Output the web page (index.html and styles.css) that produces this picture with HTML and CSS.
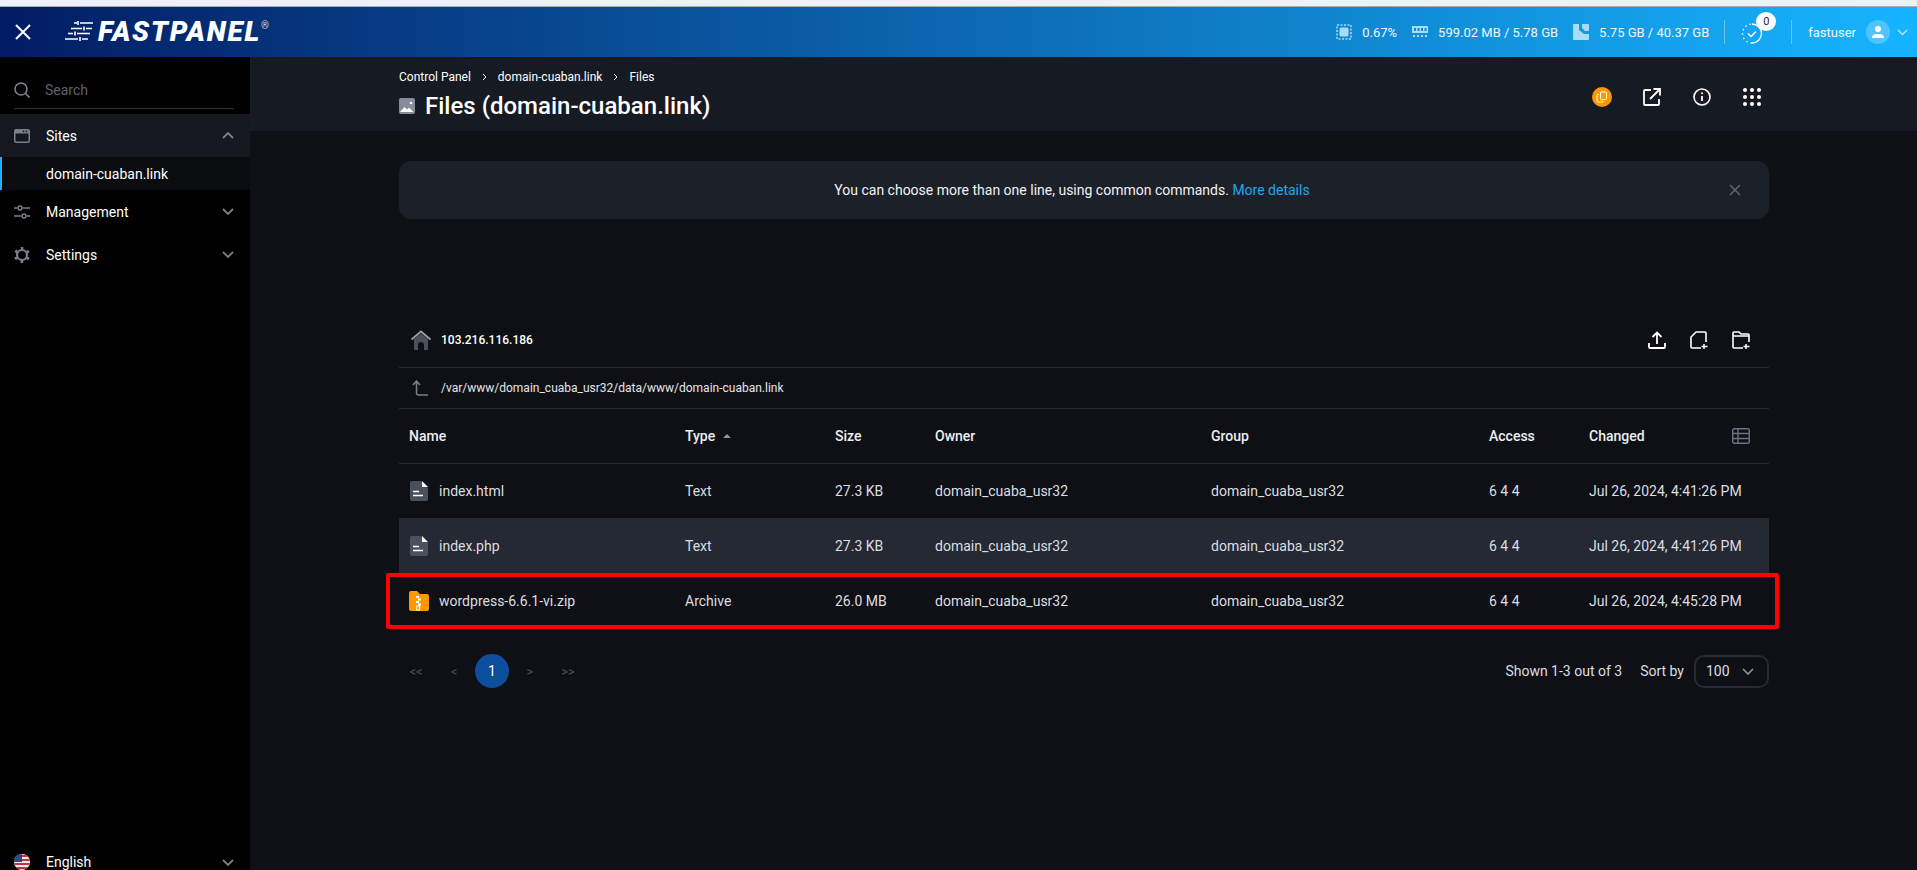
FILE: index.html
```html
<!DOCTYPE html>
<html lang="en">

<head>
    <meta charset="UTF-8">
    <meta name="viewport" content="width=device-width, initial-scale=1.0">
    <title>Files (domain-cuaban.link)</title>
    <link rel="stylesheet" href="styles.css">
</head>

<body>

    <div class="browser-strip"></div>

    <!-- Top bar -->
    <header class="topbar">
        <svg class="close-icon" width="16" height="16" viewBox="0 0 16 16"><path d="M1 1l14 14M15 1L1 15" stroke="#fff" stroke-width="2" fill="none"/></svg>
        <div class="logo">
            <svg width="28" height="22" viewBox="0 0 28 22" fill="none" stroke="#fff" stroke-width="1.6">
                <path d="M9 2h3M15 2h13"/>
                <path d="M6 7.500h11M21 7.500h6"/>
                <path d="M3 12.500h5M12 12.500h13"/>
                <path d="M0 18h13M17 18h6"/>
                <path d="M13 0v4M19 5.500v4M10 10.500v4M15 16v4"/>
            </svg>
            <span class="logo-text">FASTPANEL</span>
            <span class="logo-reg">®</span>
        </div>
        <div class="stats">
            <div class="stat">
                <svg width="16" height="16" viewBox="0 0 16 16"><rect x="3.500" y="3.500" width="9" height="9" rx="1.500" fill="#a9dcf7"/><path d="M1 1h14v14H1z" fill="none" stroke="#a9dcf7" stroke-width="1.500" stroke-dasharray="2 1.500"/></svg>
                <span>0.67%</span>
            </div>
            <div class="stat">
                <svg width="16" height="14" viewBox="0 0 16 14" fill="#a9dcf7"><path d="M0 1h16v7H0z"/><path d="M2 3h2v3H2zM5.500 3h2v3h-2zM9 3h2v3H9zM12.500 3h2v3h-2z" fill="#1587cf"/><path d="M1 10h2v2H1zM5 10h2v2H5zM9 10h2v2H9zM13 10h2v2h-2z"/></svg>
                <span>599.02 MB / 5.78 GB</span>
            </div>
            <div class="stat">
                <svg width="16" height="16" viewBox="0 0 16 16"><path d="M1 0h5v6l5 4h5v5a1 1 0 0 1-1 1H1a1 1 0 0 1-1-1V1a1 1 0 0 1 1-1zM9 0h6a1 1 0 0 1 1 1v6h-4L9 4z" fill="#a9dcf7"/></svg>
                <span>5.75 GB / 40.37 GB</span>
            </div>
            <div class="divider"></div>
            <div class="tasks">
                <svg width="22" height="24" viewBox="0 0 22 24" fill="none" stroke="#fff" stroke-width="1.300">
                    <path d="M11 3a9.500 9.500 0 0 1 0 19" />
                    <path d="M11 22a9.500 9.500 0 0 1-9.500-9.500A9.500 9.500 0 0 1 11 3" stroke-dasharray="1.500 3"/>
                    <path d="M7 12.500l3 3 5-5" stroke-width="1.500"/>
                </svg>
                <span class="badge">0</span>
            </div>
            <div class="divider"></div>
            <span class="username">fastuser</span>
            <span class="avatar">
                <svg width="12" height="12" viewBox="0 0 12 12" fill="#fff"><circle cx="6" cy="3" r="3"/><path d="M0 12c0-3 2-4 6-4s6 1 6 4z"/></svg>
            </span>
            <svg class="user-chevron" width="11" height="7" viewBox="0 0 11 7"><path d="M1 1l4.500 4.500L10 1" stroke="#b5e2fb" stroke-width="1.500" fill="none"/></svg>
        </div>
    </header>

    <div class="layout">

        <!-- Sidebar -->
        <aside class="sidebar">
            <div class="search">
                <div class="search-inner">
                    <svg width="16" height="16" viewBox="0 0 16 16" fill="none" stroke="#79808c" stroke-width="1.600"><circle cx="7" cy="7" r="6"/><path d="M11.500 11.500L15.500 15.500"/></svg>
                    <span>Search</span>
                </div>
            </div>
            <div class="nav-item nav-open">
                <svg width="16" height="14" viewBox="0 0 16 14"><path fill-rule="evenodd" d="M2 0h12a2 2 0 0 1 2 2v10a2 2 0 0 1-2 2H2a2 2 0 0 1-2-2V2a2 2 0 0 1 2-2zm-.500 4.500V12a.500.500 0 0 0 .500.500h12a.500.500 0 0 0 .500-.500V4.500z" fill="#79808c"/><circle cx="9.500" cy="2.300" r="0.900" fill="#15181f"/><circle cx="12.500" cy="2.300" r="0.900" fill="#15181f"/></svg>
                <span>Sites</span>
                <svg class="chevron" width="12" height="7" viewBox="0 0 12 7"><path d="M1 6l5-5 5 5" stroke="#79808c" stroke-width="1.800" fill="none"/></svg>
            </div>
            <div class="nav-sub">domain-cuaban.link</div>
            <div class="nav-item">
                <svg width="16" height="14" viewBox="0 0 16 14" fill="none" stroke="#79808c" stroke-width="1.500"><path d="M0 3h3M9 3h7M0 11h7M13 11h3"/><circle cx="6" cy="3" r="2"/><circle cx="10" cy="11" r="2"/></svg>
                <span>Management</span>
                <svg class="chevron" width="12" height="7" viewBox="0 0 12 7"><path d="M1 1l5 5 5-5" stroke="#79808c" stroke-width="1.800" fill="none"/></svg>
            </div>
            <div class="nav-item">
                <svg width="16" height="16" viewBox="0 0 16 16" fill="none" stroke="#79808c"><circle cx="8" cy="8" r="5" stroke-width="2.200"/><circle cx="8" cy="8" r="6.800" stroke-width="2.400" stroke-dasharray="2.800 4.320" stroke-dashoffset="1.400" transform="rotate(-90 8 8)"/></svg>
                <span>Settings</span>
                <svg class="chevron" width="12" height="7" viewBox="0 0 12 7"><path d="M1 1l5 5 5-5" stroke="#79808c" stroke-width="1.800" fill="none"/></svg>
            </div>
            <div class="nav-item nav-lang">
                <svg width="16" height="16" viewBox="0 0 16 16"><defs><clipPath id="flag"><circle cx="8" cy="8" r="8"/></clipPath></defs><g clip-path="url(#flag)"><rect width="16" height="16" fill="#eee"/><path d="M0 1h16v2H0zM0 5h16v2H0zM0 9h16v2H0zM0 13h16v2H0z" fill="#c8313e"/><rect width="8" height="8" fill="#2d4a8a"/></g></svg>
                <span>English</span>
                <svg class="chevron" width="12" height="7" viewBox="0 0 12 7"><path d="M1 1l5 5 5-5" stroke="#79808c" stroke-width="1.800" fill="none"/></svg>
            </div>
        </aside>

        <main class="main">

            <!-- Page header -->
            <div class="page-head">
                <div class="page-head-left">
                    <div class="breadcrumbs">
                        <span>Control Panel</span>
                        <svg width="5" height="8" viewBox="0 0 5 8"><path d="M1 1l3 3-3 3" stroke="#fff" fill="none"/></svg>
                        <span>domain-cuaban.link</span>
                        <svg width="5" height="8" viewBox="0 0 5 8"><path d="M1 1l3 3-3 3" stroke="#fff" fill="none"/></svg>
                        <span>Files</span>
                    </div>
                    <div class="page-title">
                        <svg width="16" height="16" viewBox="0 0 16 16"><rect width="16" height="16" rx="2" fill="#868c99"/><path d="M1 14l4.500-5 2.500 2.500 2-2 4.500 4.500z" fill="#fff"/><circle cx="12" cy="5" r="1.300" fill="#fff"/></svg>
                        <h1>Files (domain-cuaban.link)</h1>
                    </div>
                </div>
                <div class="page-actions">
                    <span class="orange-dot">
                        <svg width="12" height="12" viewBox="0 0 12 12" fill="none" stroke="#fff" stroke-width="1"><rect x="4.500" y="1" width="6" height="7.500" rx="1"/><path d="M3 3.500H2a1 1 0 0 0-1 1V10a1 1 0 0 0 1 1h4a1 1 0 0 0 1-1v-.500"/></svg>
                    </span>
                    <svg width="18" height="18" viewBox="0 0 18 18" fill="none" stroke="#fff" stroke-width="1.800"><path d="M8 2H2a1 1 0 0 0-1 1v13a1 1 0 0 0 1 1h13a1 1 0 0 0 1-1v-5"/><path d="M7 11L17 1M10.500 1H17v6.500"/></svg>
                    <svg width="18" height="18" viewBox="0 0 18 18" fill="none" stroke="#fff" stroke-width="1.600"><circle cx="9" cy="9" r="8"/><path d="M9 8v5" stroke-width="1.800"/><circle cx="9" cy="5.300" r="1" fill="#fff" stroke="none"/></svg>
                    <svg width="18" height="18" viewBox="0 0 18 18" fill="#fff"><circle cx="2" cy="2" r="2"/><circle cx="9" cy="2" r="2"/><circle cx="16" cy="2" r="2"/><circle cx="2" cy="9" r="2"/><circle cx="9" cy="9" r="2"/><circle cx="16" cy="9" r="2"/><circle cx="2" cy="16" r="2"/><circle cx="9" cy="16" r="2"/><circle cx="16" cy="16" r="2"/></svg>
                </div>
            </div>

            <div class="content">

                <!-- Notice -->
                <div class="notice">
                    <p>You can choose more than one line, using common commands. <a href="#">More details</a></p>
                    <svg class="notice-close" width="12" height="12" viewBox="0 0 12 12"><path d="M1 1l10 10M11 1L1 11" stroke="#5d636f" stroke-width="1.600" fill="none"/></svg>
                </div>

                <!-- File manager -->
                <div class="host-row">
                    <svg width="20" height="20" viewBox="0 0 20 20"><path d="M3 9l7-5.500L17 9v10a1 1 0 0 1-1 1h-3v-5a3 3 0 0 0-6 0v5H4a1 1 0 0 1-1-1z" fill="#4a505c"/><path d="M.500 9.500L10 1.500l9.500 8" stroke="#9aa0ab" stroke-width="1.800" fill="none"/></svg>
                    <span class="host-name">103.216.116.186</span>
                    <div class="host-actions">
                        <svg width="18" height="18" viewBox="0 0 18 18" fill="none" stroke="#fff" stroke-width="1.800"><path d="M9 13V2M4.500 6L9 1.500 13.500 6"/><path d="M1 12v4a1 1 0 0 0 1 1h14a1 1 0 0 0 1-1v-4"/></svg>
                        <svg width="18" height="18" viewBox="0 0 18 18" fill="none" stroke="#fff" stroke-width="1.600"><path d="M11 17H2a1 1 0 0 1-1-1V6l5-5h9a1 1 0 0 1 1 1v9"/><path d="M14 13v5M11.500 15.500h6" stroke-width="1.500"/></svg>
                        <svg width="18" height="18" viewBox="0 0 18 18" fill="none" stroke="#fff" stroke-width="1.600"><path d="M11 17H2a1 1 0 0 1-1-1V2a1 1 0 0 1 1-1h5l2 2h7a1 1 0 0 1 1 1v7M1 5h16"/><path d="M14 13v5M11.500 15.500h6" stroke-width="1.500"/></svg>
                    </div>
                </div>
                <div class="path-row">
                    <svg width="16" height="16" viewBox="0 0 16 16" fill="none" stroke="#79808c" stroke-width="1.500"><path d="M1 5l3.500-4L8 5M4.500 1.500V13a2 2 0 0 0 2 2H16"/></svg>
                    <span>/var/www/domain_cuaba_usr32/data/www/domain-cuaban.link</span>
                </div>

                <div class="file-row file-head">
                    <div>Name</div>
                    <div class="sorted">Type <span class="sort-arrow"></span></div>
                    <div>Size</div>
                    <div>Owner</div>
                    <div>Group</div>
                    <div>Access</div>
                    <div class="changed-head">
                        Changed
                        <svg width="18" height="16" viewBox="0 0 18 16" fill="none" stroke="#6b7280" stroke-width="1.400"><rect x=".7" y=".7" width="16.600" height="14.600" rx="1.500"/><path d="M.7 5.500h16.600M.7 10.500h16.600M6 .7v14.600"/></svg>
                    </div>
                </div>

                <div class="file-row">
                    <div class="file-name">
                        <svg width="18" height="20" viewBox="0 0 18 20"><path d="M2 0h9l7 7v11a2 2 0 0 1-2 2H2a2 2 0 0 1-2-2V2a2 2 0 0 1 2-2z" fill="#4a505c"/><path d="M12 0l6 6h-6z" fill="#fff"/><path d="M3 10.500h6M3 14.500h10" stroke="#fff" stroke-width="1.500"/></svg>
                        <span>index.html</span>
                    </div>
                    <div>Text</div>
                    <div>27.3 KB</div>
                    <div>domain_cuaba_usr32</div>
                    <div>domain_cuaba_usr32</div>
                    <div>6 4 4</div>
                    <div>Jul 26, 2024, 4:41:26 PM</div>
                </div>
                <div class="file-row file-hover">
                    <div class="file-name">
                        <svg width="18" height="20" viewBox="0 0 18 20"><path d="M2 0h9l7 7v11a2 2 0 0 1-2 2H2a2 2 0 0 1-2-2V2a2 2 0 0 1 2-2z" fill="#4a505c"/><path d="M12 0l6 6h-6z" fill="#fff"/><path d="M3 10.500h6M3 14.500h10" stroke="#fff" stroke-width="1.500"/></svg>
                        <span>index.php</span>
                    </div>
                    <div>Text</div>
                    <div>27.3 KB</div>
                    <div>domain_cuaba_usr32</div>
                    <div>domain_cuaba_usr32</div>
                    <div>6 4 4</div>
                    <div>Jul 26, 2024, 4:41:26 PM</div>
                </div>
                <div class="file-row file-marked">
                    <div class="file-name">
                        <svg class="zip-icon" width="20" height="20" viewBox="0 0 20 20"><path d="M2 0h6l3 3h7a2 2 0 0 1 2 2v13a2 2 0 0 1-2 2H2a2 2 0 0 1-2-2V2a2 2 0 0 1 2-2z" fill="#ff9800"/><path d="M7 5h3v2H7zM9 7.500h3v2H9zM7 10h3v2H7zM9 12.500h3v2H9z" fill="#fff"/><rect x="7.700" y="15" width="3" height="4" fill="none" stroke="#fff"/></svg>
                        <span>wordpress-6.6.1-vi.zip</span>
                    </div>
                    <div>Archive</div>
                    <div>26.0 MB</div>
                    <div>domain_cuaba_usr32</div>
                    <div>domain_cuaba_usr32</div>
                    <div>6 4 4</div>
                    <div>Jul 26, 2024, 4:45:28 PM</div>
                </div>

                <!-- Pagination -->
                <div class="pager-row">
                    <div class="pager">
                        <span>&lt;&lt;</span>
                        <span>&lt;</span>
                        <span class="page-current">1</span>
                        <span>&gt;</span>
                        <span>&gt;&gt;</span>
                    </div>
                    <div class="pager-right">
                        <span>Shown 1-3 out of 3</span>
                        <span class="sort-label">Sort by</span>
                        <div class="sort-select">
                            <span>100</span>
                            <svg width="12" height="7" viewBox="0 0 12 7"><path d="M1 1l5 5 5-5" stroke="#8b93a3" stroke-width="1.600" fill="none"/></svg>
                        </div>
                    </div>
                </div>
            </div>
        </main>
    </div>

</body>

</html>
```

FILE: styles.css
```css
* {
    box-sizing: border-box;
}

html, body {
    height: 100%;
}

body {
    font-family: Roboto, Arial, sans-serif;
    font-size: 14px;
    background-color: #0e1015;
    color: #e4e6ea;
    margin: 0;
    padding: 0;
    overflow: hidden;
    display: flex;
    flex-direction: column;
}

svg {
    flex-shrink: 0;
    display: block;
}

.browser-strip {
    height: 7px;
    background-color: #eef1f8;
    border-bottom: 1px solid #a9acb2;
}

/* Top bar */
.topbar {
    height: 50px;
    display: flex;
    align-items: center;
    padding: 0 9px 0 15px;
    background: linear-gradient(to right, #021c63, #16b4ff);
    color: #fff;
}

.close-icon {
    margin-right: 34px;
}

.logo {
    display: flex;
    align-items: center;
    gap: 5px;
}

.logo-text {
    font-size: 28px;
    font-weight: 900;
    font-style: italic;
    letter-spacing: 1.7px;
    line-height: 1;
}

.logo-reg {
    font-size: 10px;
    margin: -14px 0 0 -5px;
    color: #cfd8ea;
}

.stats {
    margin-left: auto;
    display: flex;
    align-items: center;
    font-size: 13px;
    color: #eef7fd;
}

.stat {
    display: flex;
    align-items: center;
    gap: 10px;
    margin-right: 15px;
}

.divider {
    width: 1px;
    height: 24px;
    background-color: rgba(255, 255, 255, 0.35);
}

.tasks {
    position: relative;
    margin: 2px 28px 0 16px;
}

.badge {
    position: absolute;
    top: -9px;
    left: 15px;
    width: 20px;
    height: 19px;
    border-radius: 50%;
    background-color: #fff;
    color: #1c2433;
    font-size: 11px;
    line-height: 19px;
    text-align: center;
}

.username {
    margin: 0 10px 0 16px;
}

.avatar {
    width: 24px;
    height: 24px;
    border-radius: 50%;
    background-color: rgba(255, 255, 255, 0.25);
    display: flex;
    align-items: center;
    justify-content: center;
}

.user-chevron {
    margin-left: 7px;
}

/* Sidebar */
.layout {
    flex: 1;
    display: flex;
    min-height: 0;
}

.sidebar {
    width: 250px;
    background-color: #000;
    display: flex;
    flex-direction: column;
    color: #fff;
}

.search {
    height: 57px;
    padding: 0 16px 5px 14px;
    display: flex;
    align-items: flex-end;
}

.search-inner {
    width: 100%;
    height: 36px;
    display: flex;
    align-items: center;
    gap: 15px;
    border-bottom: 1px solid #2d3140;
    color: #5e6167;
    padding-bottom: 2px;
}

.nav-item {
    height: 43px;
    display: flex;
    align-items: center;
    padding: 0 16px 0 14px;
    gap: 16px;
    flex-shrink: 0;
}

.nav-open {
    background-color: #15181f;
}

.chevron {
    margin-left: auto;
}

.nav-sub {
    height: 33px;
    display: flex;
    align-items: center;
    padding-left: 44px;
    background-color: #0b0c10;
    border-left: 2px solid #1fb0f5;
}

.nav-lang {
    margin-top: auto;
    height: 16px;
}

/* Page header */
.main {
    flex: 1;
    min-width: 0;
}

.page-head {
    height: 74px;
    background-color: #161a22;
    padding: 13px 148px 0 149px;
    display: flex;
    justify-content: space-between;
}

.breadcrumbs {
    display: flex;
    align-items: center;
    gap: 11px;
    font-size: 12px;
    color: #fff;
    line-height: 14px;
}

.page-title {
    display: flex;
    align-items: center;
    gap: 10px;
    margin-top: 7px;
}

.page-title h1 {
    margin: 0;
    font-size: 24px;
    font-weight: 500;
    color: #fff;
    line-height: 30px;
}

.page-actions {
    display: flex;
    align-items: center;
    gap: 32px;
    padding: 0 8px 7px 0;
}

.orange-dot {
    width: 20px;
    height: 20px;
    border-radius: 50%;
    background-color: #ff9800;
    display: flex;
    align-items: center;
    justify-content: center;
    margin-right: -1px;
}

/* Content */
.content {
    padding: 30px 148px 0 149px;
}

.notice {
    height: 58px;
    padding-right: 24px;
    background-color: #1c2029;
    border-radius: 12px;
    display: flex;
    align-items: center;
    justify-content: center;
    position: relative;
    color: #f1f2f4;
}

.notice p {
    margin: 0;
}

.notice a {
    color: #22a7ee;
    text-decoration: none;
}

.notice-close {
    position: absolute;
    right: 28px;
    top: 23px;
}

.host-row {
    height: 55px;
    margin-top: 94px;
    display: flex;
    align-items: center;
    padding: 0 19px 0 12px;
    border-bottom: 1px solid #262a34;
}

.host-name {
    margin-left: 10px;
    font-size: 12px;
    font-weight: 500;
    color: #fff;
}

.host-actions {
    margin-left: auto;
    display: flex;
    gap: 24px;
}

.path-row {
    height: 41px;
    display: flex;
    align-items: center;
    gap: 13px;
    padding-left: 13px;
    font-size: 12px;
    color: #e4e6ea;
    border-bottom: 1px solid #262a34;
}

.file-row {
    height: 55px;
    display: grid;
    grid-template-columns: 276px 150px 100px 276px 278px 100px 1fr;
    align-items: center;
    padding-left: 10px;
    color: #dcdee2;
}

.file-head {
    font-weight: 500;
    color: #eceef1;
    border-bottom: 1px solid #262a34;
    margin-bottom: -1px;
}

.sorted {
    display: flex;
    align-items: center;
    gap: 8px;
}

.sort-arrow {
    width: 0;
    height: 0;
    border-left: 4px solid transparent;
    border-right: 4px solid transparent;
    border-bottom: 4px solid #8b93a3;
}

.changed-head {
    display: flex;
    justify-content: space-between;
    align-items: center;
    padding-right: 19px;
}

.file-name {
    display: flex;
    align-items: center;
    gap: 11px;
    padding-left: 1px;
}

.zip-icon {
    margin: 0 -1px 0 -1px;
}

.file-hover {
    background-color: #252933;
}

.file-marked {
    position: relative;
}

/* the red highlight drawn on top of the last row */
.file-marked::after {
    content: "";
    position: absolute;
    top: 0;
    left: -13px;
    right: -10px;
    bottom: -1px;
    border: 4px solid #ff0000;
    border-radius: 2px;
}

.pager-row {
    margin-top: 26px;
    display: flex;
    align-items: center;
    justify-content: space-between;
}

.pager {
    display: flex;
    align-items: center;
    margin-left: -2px;
    color: #51555f;
    font-size: 13px;
}

.pager span {
    width: 38px;
    text-align: center;
}

.pager .page-current {
    width: 34px;
    height: 34px;
    margin: 0 2px;
    border-radius: 50%;
    background-color: #0b4f9c;
    color: #fff;
    font-size: 14px;
    line-height: 34px;
}

.pager-right {
    display: flex;
    align-items: center;
    color: #dcdee2;
}

.sort-label {
    margin: 0 10px 0 18px;
}

.sort-select {
    width: 75px;
    height: 33px;
    border: 2px solid #262b36;
    border-radius: 10px;
    display: flex;
    align-items: center;
    justify-content: space-between;
    padding: 0 13px 0 10px;
}
```
